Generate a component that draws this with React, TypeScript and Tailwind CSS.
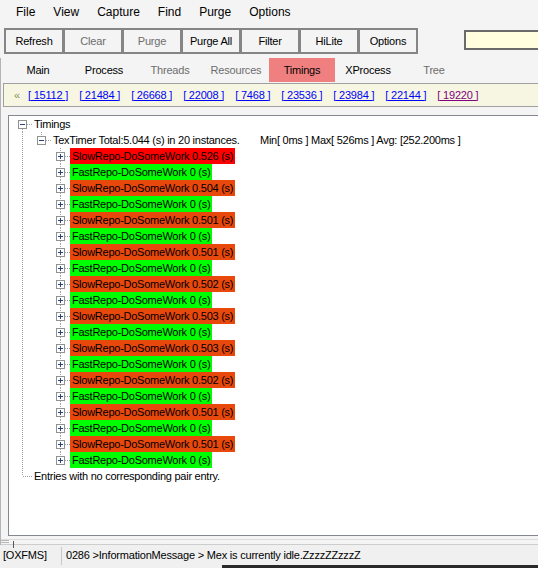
import React from "react";

type CellProps = { top?: boolean; bottom?: boolean; right?: boolean; full?: boolean; box?: "plus" | "minus" | null };

function Cell({ top, bottom, right, full, box }: CellProps) {
  const dot = { stroke: "#a0a0a0", strokeWidth: 1, strokeDasharray: "1 1" } as const;
  return (
    <svg width="19" height="16" viewBox="0 0 19 16" shapeRendering="crispEdges" className="shrink-0 block">
      {full && <line x1="9.5" y1="0" x2="9.5" y2="16" {...dot} />}
      {top && <line x1="9.5" y1="0" x2="9.5" y2={box ? 4 : 8} {...dot} />}
      {bottom && <line x1="9.5" y1={box ? 13 : 8} x2="9.5" y2="16" {...dot} />}
      {right && <line x1={box ? 14 : 10} y1="8.5" x2="19" y2="8.5" {...dot} />}
      {box && (
        <g>
          <rect x="5.5" y="4.5" width="8" height="8" fill="#fff" stroke="#919191" strokeWidth="1" />
          <line x1="7" y1="8.5" x2="12" y2="8.5" stroke="#2a3f84" strokeWidth="1" />
          {box === "plus" && <line x1="9.5" y1="6" x2="9.5" y2="11" stroke="#2a3f84" strokeWidth="1" />}
        </g>
      )}
    </svg>
  );
}

const kids: { slow: boolean; val: string; color: string }[] = [
  { slow: true, val: "0.526", color: "bg-[#ff0000]" },
  { slow: false, val: "0", color: "bg-[#00ff00]" },
  { slow: true, val: "0.504", color: "bg-[#e8480c]" },
  { slow: false, val: "0", color: "bg-[#00ff00]" },
  { slow: true, val: "0.501", color: "bg-[#e8480c]" },
  { slow: false, val: "0", color: "bg-[#00ff00]" },
  { slow: true, val: "0.501", color: "bg-[#e8480c]" },
  { slow: false, val: "0", color: "bg-[#00ff00]" },
  { slow: true, val: "0.502", color: "bg-[#e8480c]" },
  { slow: false, val: "0", color: "bg-[#00ff00]" },
  { slow: true, val: "0.503", color: "bg-[#e8480c]" },
  { slow: false, val: "0", color: "bg-[#00ff00]" },
  { slow: true, val: "0.503", color: "bg-[#e8480c]" },
  { slow: false, val: "0", color: "bg-[#00ff00]" },
  { slow: true, val: "0.502", color: "bg-[#e8480c]" },
  { slow: false, val: "0", color: "bg-[#00ff00]" },
  { slow: true, val: "0.501", color: "bg-[#e8480c]" },
  { slow: false, val: "0", color: "bg-[#00ff00]" },
  { slow: true, val: "0.501", color: "bg-[#e8480c]" },
  { slow: false, val: "0", color: "bg-[#00ff00]" },
];

const pids = ["15112", "21484", "26668", "22008", "7468", "23536", "23984", "22144", "19220"];

const buttons: { label: string; dim?: boolean }[] = [
  { label: "Refresh" },
  { label: "Clear", dim: true },
  { label: "Purge", dim: true },
  { label: "Purge All" },
  { label: "Filter" },
  { label: "HiLite" },
  { label: "Options" },
];

const tabs: { label: string; dim?: boolean; active?: boolean }[] = [
  { label: "Main" },
  { label: "Process" },
  { label: "Threads", dim: true },
  { label: "Resources", dim: true },
  { label: "Timings", active: true },
  { label: "XProcess" },
  { label: "Tree", dim: true },
];

export default function App() {
  return (
    <div className="w-[538px] h-[568px] bg-[#f4f4f4] overflow-hidden flex flex-col font-['Liberation_Sans',Arial,sans-serif] text-black">
      {/* Menu */}
      <div className="h-[24px] flex items-center pl-[7px] text-[12px] shrink-0">
        {["File", "View", "Capture", "Find", "Purge", "Options"].map((m) => (
          <span key={m} className="px-[9px]">{m}</span>
        ))}
      </div>
      {/* Toolbar */}
      <div className="h-[26px] mt-[4px] flex pl-[4px] shrink-0">
        {buttons.map((b, i) => (
          <div
            key={b.label}
            className={`w-[60px] h-[26px] shrink-0 border-2 border-[#858585] flex items-center justify-center text-[11px] tracking-[-0.2px] ${i > 0 ? "-ml-[1px]" : ""} ${b.dim ? "text-[#6d6d6d]" : "text-black"}`}
          >
            {b.label}
          </div>
        ))}
        <div className="ml-[46px] mt-[2px] w-[90px] h-[20px] border-2 border-[#6a6a6a] bg-[#ffffe0] shrink-0" />
      </div>
      <div className="flex-1 flex flex-col border-l border-[#b4b4b4] mt-[4px] min-h-0">
        {/* Tabs */}
        <div className="h-[24px] flex pl-[4px] shrink-0">
          {tabs.map((t) => (
            <div
              key={t.label}
              className={`w-[66px] h-[24px] shrink-0 flex items-center justify-center text-[11px] tracking-[-0.2px] ${t.active ? "bg-[#f08080]" : ""} ${t.dim ? "text-[#6d6d6d]" : "text-black"}`}
            >
              {t.label}
            </div>
          ))}
        </div>
        {/* PID bar */}
        <div className="mt-[1px] ml-[2px] w-[560px] h-[24px] border border-[#a0a0a0] bg-[#f6f6e2] flex items-center pl-[10px] text-[11px] tracking-[-0.2px] shrink-0">
          <span className="text-[#8c8c60] mr-[8px]">«</span>
          {pids.map((p, i) => (
            <span
              key={p}
              className={`underline mr-[11px] whitespace-pre ${i === pids.length - 1 ? "text-[#800080]" : "text-[#0000ff]"}`}
            >
              {`[ ${p} ]`}
            </span>
          ))}
        </div>
        {/* Tree */}
        <div className="mt-[8px] ml-[7px] w-[560px] h-[421px] border border-[#828790] bg-white pl-[4px] text-[11px] tracking-[-0.25px] leading-[16px] shrink-0 overflow-hidden">
          <div className="h-[16px] flex">
            <Cell bottom right box="minus" />
            <span className="pl-[2px]">Timings</span>
          </div>
          <div className="h-[16px] flex">
            <Cell full />
            <Cell top right box="minus" />
            <span className="pl-[2px] whitespace-pre flex">
              <span className="w-[207px] shrink-0">TexTimer Total:5.044 (s) in 20 instances.</span>
              <span>Min[ 0ms ] Max[ 526ms ] Avg: [252.200ms ]</span>
            </span>
          </div>
          {kids.map((k, i) => (
            <div key={i} className="h-[16px] flex">
              <Cell full />
              <Cell />
              <Cell top bottom={i < kids.length - 1} right box="plus" />
              <span className={`px-[2px] h-[16px] whitespace-pre ${k.color}`}>
                {`${k.slow ? "SlowRepo" : "FastRepo"}-DoSomeWork ${k.val} (s)`}
              </span>
            </div>
          ))}
          <div className="h-[16px] flex">
            <Cell top right />
            <span className="pl-[2px]">Entries with no corresponding pair entry.</span>
          </div>
        </div>
        {/* splitter */}
        <div className="relative h-[9px] shrink-0">
          <div className="h-[3px]" />
          <div className="h-[1px] bg-[#dcdcdc]" />
          <div className="h-[4px]" />
          <div className="h-[1px] bg-[#cdcdcd]" />
          <svg className="absolute left-0 top-[4px]" width="20" height="8" shapeRendering="crispEdges">
            <line x1="0" y1="0.5" x2="8" y2="0.5" stroke="#b8b8b8" />
            <line x1="0" y1="2.5" x2="8" y2="2.5" stroke="#b8b8b8" />
            <line x1="12.5" y1="1" x2="12.5" y2="8" stroke="#555" />
          </svg>
        </div>
      </div>
      {/* Status bar */}
      <div className="h-[20px] flex items-center text-[11px] tracking-[-0.2px] shrink-0 bg-[#f0f0f0]">
        <span className="pl-[3px] w-[61px] shrink-0">[OXFMS]</span>
        <div className="w-px h-[18px] mt-[2px] bg-[#c8c8c8] shrink-0" />
        <span className="pl-[4px] whitespace-pre">0286 &gt;InformationMessage &gt; Mex is currently idle.ZzzzZZzzzZ</span>
      </div>
      <div className="h-[3px] flex shrink-0">
        <div className="w-[222px] bg-[#f0f0f0]" />
        <div className="flex-1 bg-[#2a2a2a]" />
      </div>
    </div>
  );
}
